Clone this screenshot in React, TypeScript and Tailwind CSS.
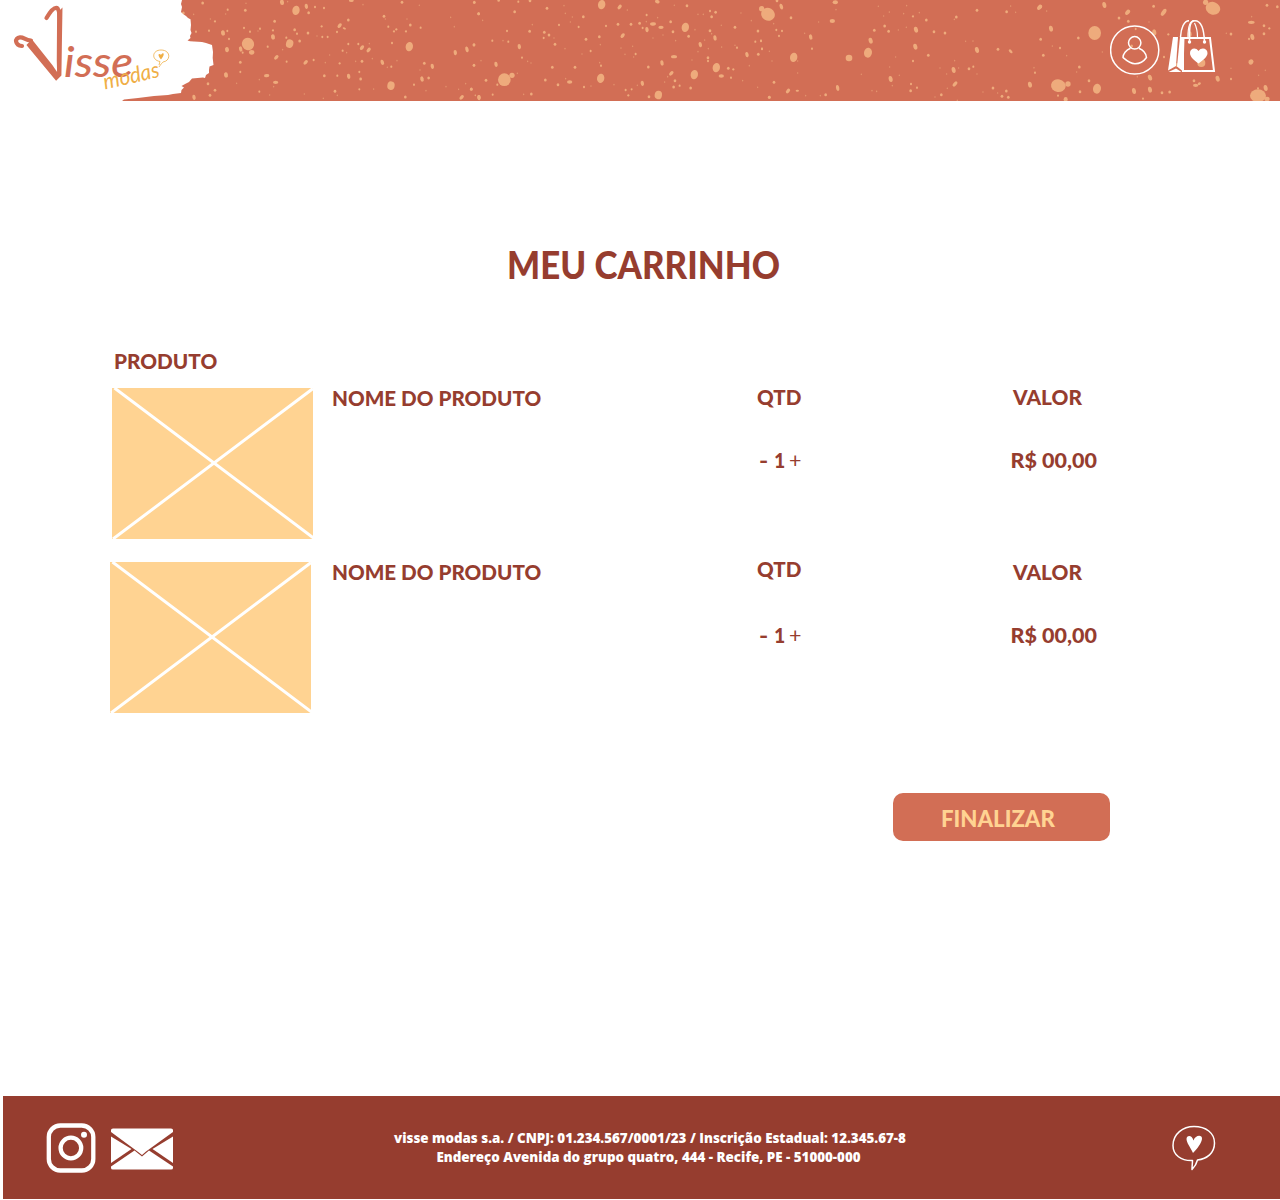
import React from "react";

type Dot = [number, number, number, number?, number?];
type Patch = { x: number; dots: Dot[] };

// Paint splatter, grouped in patches drawn on a grid three times finer than the page.
// Each dot: centre x, centre y, x radius, y radius, rotation.
const patches: Patch[] = [
  {
    x: 180,
    dots: [
      [204, 132, 18, 19, -30], [215, 157, 8, 7], [182, 147, 5, 8, -15], [188, 158, 3], [329, 131, 11, 13, 15], [348, 31, 11, 14, 10],
      [379, 19, 5, 8, -10], [306, 7, 6, 8, -10], [386, 38, 4], [129, 99, 6, 8, -10], [141, 149, 6, 8, -10], [138, 225, 6, 8, -10],
      [279, 111, 6, 8, -10], [289, 172, 8, 5, -45], [377, 187, 8, 5, -45], [260, 227, 8, 5, -5], [287, 247, 8, 5, 0],
      [479, 77, 8, 5, -50], [493, 85, 5, 3, 20], [471, 96, 3], [546, 143, 8, 5, -50], [566, 150, 8, 5, -50], [607, 187, 5, 8, -20],
      [506, 229, 5, 8, -10], [633, 257, 11, 13, 10], [688, 140, 11, 14, 10], [757, 199, 5, 8, -10], [726, 237, 5, 8, -15],
      [746, 234, 4], [826, 158, 5, 8, -10], [861, 148, 5, 9, -15], [845, 292, 8, 5, -45], [897, 292, 5, 7], [514, 2, 7, 4],
      [42, 292, 5, 8, -10], [10, 39, 4], [68, 9, 4], [41, 43, 2], [91, 57, 2], [105, 64, 3], [87, 92, 3], [48, 95, 3], [143, 29, 3],
      [137, 42, 2], [196, 31, 4], [198, 10, 2], [142, 93, 3], [147, 117, 3], [192, 84, 3], [210, 95, 3], [240, 86, 3], [234, 93, 2],
      [284, 64, 4], [279, 91, 3], [263, 140, 3], [323, 5, 2], [344, 89, 4], [351, 101, 3], [384, 99, 4], [319, 113, 3], [359, 123, 4],
      [405, 21, 3], [432, 24, 3], [425, 79, 3], [411, 108, 2], [427, 111, 3], [443, 111, 3], [505, 60, 4], [549, 14, 2],
      [505, 132, 3], [535, 132, 3], [568, 131, 2], [488, 152, 3], [500, 158, 2], [449, 165, 2], [308, 149, 2], [181, 187, 4],
      [181, 216, 3], [320, 185, 3], [401, 180, 3], [436, 188, 2], [479, 190, 3], [527, 184, 2], [546, 184, 4], [577, 176, 2],
      [622, 202, 2], [634, 200, 3], [651, 182, 2], [636, 129, 3], [612, 49, 4], [616, 57, 2], [625, 80, 3], [642, 94, 3], [649, 88, 3],
      [678, 94, 3], [691, 75, 4], [681, 57, 2], [722, 83, 3], [666, 7, 4], [718, 16, 2], [812, 52, 2], [823, 80, 2], [883, 8, 3],
      [896, 41, 4], [882, 135, 4], [882, 196, 3], [733, 190, 4], [720, 210, 2], [702, 254, 3], [738, 272, 2], [676, 291, 4],
      [798, 260, 2], [836, 268, 2], [857, 251, 2], [874, 268, 4], [886, 286, 2], [433, 227, 4], [472, 227, 3], [538, 216, 3],
      [542, 237, 4], [538, 268, 3], [581, 267, 2], [465, 274, 4], [472, 286, 2], [430, 295, 2], [373, 282, 2], [269, 285, 2],
      [238, 275, 3], [238, 239, 2], [281, 260, 2], [170, 250, 2], [105, 271, 4], [90, 286, 4], [84, 251, 4],
    ],
  },
  {
    x: 470,
    dots: [
      [103, 239, 19, 19], [126, 226, 8, 8], [82, 254, 3], [395, 14, 11, 14, 10], [449, 21, 8, 5, -50], [562, 5, 7, 5, 20],
      [392, 235, 11, 14, 10], [565, 285, 11, 13, 10], [646, 82, 11, 14, 10], [673, 224, 11, 14, 10], [739, 203, 11, 14, 10],
      [549, 72, 9, 5, -5], [573, 82, 8, 5, 0], [531, 89, 5, 8, -10], [458, 107, 8, 5, -50], [612, 170, 9, 5, 0], [576, 189, 5, 8, -10],
      [604, 220, 8, 5, -45], [754, 228, 8, 5], [735, 114, 5, 8, -10], [691, 134, 5, 8, -15], [831, 164, 5, 8, -15],
      [148, 140, 5, 8, -10], [78, 193, 5, 8, -10], [299, 246, 8, 5], [517, 250, 5, 8, -10], [27, 293, 5, 8, -10], [86, 1, 4],
      [145, 5, 3], [180, 2, 4], [13, 7, 4], [26, 41, 4], [38, 61, 2], [134, 35, 4], [231, 25, 4], [282, 17, 2], [286, 40, 2],
      [187, 74, 2], [179, 94, 4], [111, 93, 3], [67, 122, 3], [99, 122, 2], [115, 125, 3], [12, 134, 4], [33, 182, 2], [12, 196, 4],
      [4, 267, 4], [48, 241, 4], [142, 220, 2], [156, 173, 3], [173, 184, 2], [183, 189, 2], [247, 202, 4], [315, 202, 4],
      [226, 240, 4], [264, 254, 4], [287, 236, 2], [342, 261, 3], [363, 258, 2], [432, 254, 2], [184, 282, 4], [161, 283, 2],
      [68, 284, 3], [16, 286, 2], [267, 75, 3], [301, 66, 2], [307, 51, 2], [340, 50, 4], [326, 81, 3], [223, 97, 4], [237, 105, 4],
      [221, 114, 3], [252, 114, 2], [255, 133, 4], [285, 146, 2], [348, 118, 4], [388, 110, 4], [391, 134, 2], [362, 153, 3],
      [336, 162, 2], [408, 78, 3], [444, 73, 4], [483, 73, 4], [472, 30, 2], [530, 45, 3], [529, 65, 2], [509, 70, 4], [518, 84, 3],
      [563, 53, 2], [602, 65, 4], [613, 16, 2], [651, 17, 4], [609, 95, 4], [579, 105, 2], [549, 114, 2], [617, 122, 2], [656, 109, 4],
      [675, 89, 2], [684, 43, 2], [700, 43, 2], [720, 33, 3], [737, 37, 4], [725, 50, 4], [754, 76, 2], [795, 82, 4], [813, 39, 2],
      [844, 62, 2], [864, 93, 4], [856, 125, 3], [873, 122, 3], [720, 92, 4], [725, 101, 2], [704, 120, 2], [715, 146, 2],
      [755, 141, 2], [795, 136, 2], [801, 143, 3], [684, 155, 2], [714, 173, 4], [714, 183, 3], [666, 180, 2], [775, 205, 4],
      [790, 208, 3], [783, 233, 3], [838, 197, 2], [818, 242, 2], [863, 262, 2], [865, 163, 4], [876, 146, 3], [453, 144, 2],
      [488, 139, 2], [465, 163, 2], [497, 162, 3], [491, 171, 2], [389, 188, 2], [393, 197, 3], [535, 201, 4], [593, 230, 2],
      [584, 246, 2], [615, 242, 4], [611, 261, 4], [629, 257, 3], [662, 264, 4], [467, 270, 3], [485, 268, 3], [502, 256, 2],
      [475, 286, 3], [537, 290, 4], [898, 292, 4],
    ],
  },
  {
    x: 760,
    dots: [
      [24, 43, 21, 19, 30], [5, 26, 8, 8], [64, 20, 5, 9, -20], [51, 2, 4], [93, 53, 4], [101, 172, 11, 14, 10], [267, 174, 10, 10],
      [324, 158, 12, 15, 10], [332, 122, 6, 9, -15], [217, 63, 8, 6], [226, 7, 8, 6], [228, 29, 2], [152, 111, 5, 8, -15],
      [84, 273, 8, 5, -50], [112, 272, 5, 3], [233, 264, 5, 9, -10], [392, 237, 6, 9, -10], [468, 89, 6, 9, -15], [466, 140, 6, 9, -15],
      [581, 210, 6, 9, -10], [585, 252, 9, 5, -50], [651, 150, 6, 9, -15], [752, 154, 7, 4, 45], [839, 22, 9, 6, -50],
      [41, 71, 2], [49, 90, 3], [66, 93, 3], [57, 108, 3], [3, 123, 3], [6, 147, 3],
      [28, 154, 2], [36, 183, 2], [113, 183, 2], [113, 219, 2], [42, 247, 4], [28, 292, 4], [137, 287, 2], [181, 287, 2],
      [197, 284, 4], [134, 100, 2], [156, 146, 3], [176, 66, 2], [355, 19, 2], [371, 48, 2], [388, 36, 2], [431, 41, 2],
      [440, 17, 2], [459, 49, 3], [478, 38, 2], [499, 60, 4], [374, 78, 4], [343, 91, 4], [386, 94, 4], [415, 90, 2], [439, 82, 2],
      [522, 95, 4], [555, 99, 4], [589, 51, 4], [583, 58, 2], [651, 31, 4], [740, 35, 4], [752, 18, 2], [767, 37, 2],
      [714, 148, 4], [617, 124, 2], [639, 123, 2], [505, 166, 4],
      [407, 171, 2], [459, 183, 3], [389, 201, 2], [418, 226, 2], [397, 257, 2], [304, 223, 2], [336, 272, 2], [350, 274, 2],
      [453, 252, 3], [471, 263, 3], [452, 272, 4], [540, 204, 2], [584, 182, 2], [596, 204, 2], [560, 222, 2], [627, 206, 4],
      [640, 200, 3], [651, 222, 2], [562, 265, 2], [544, 284, 4], [525, 291, 2], [592, 301, 2], [669, 276, 2], [699, 264, 4],
      [713, 279, 2], [739, 273, 4], [726, 289, 4], [745, 292, 4], [822, 203, 2], [825, 218, 3], [810, 254, 6, 9, -10],
    ],
  },
  {
    x: 1040,
    dots: [
      [55, 257, 22, 19, 10], [84, 252, 8, 8], [54, 287, 3], [77, 298, 6, 7], [171, 266, 12, 15, 10], [164, 99, 19, 21], [519, 25, 22, 19, 20],
      [497, 7, 8, 8], [193, 15, 6, 9, -10], [263, 37, 9, 6, -50], [237, 54, 4], [265, 64, 4], [371, 37, 12, 6, -55], [33, 86, 6, 9, -10],
      [343, 97, 6, 9, -10], [449, 103, 6, 9], [484, 189, 12, 12], [330, 233, 6, 9, -20], [330, 269, 6, 9, -10], [282, 273, 6, 9, -10],
      [309, 296, 3], [366, 278, 4], [389, 276, 4], [467, 256, 8, 5, 0], [478, 251, 5, 4, -30], [462, 242, 4], [533, 236, 6, 9, -15],
      [573, 237, 3], [573, 205, 2], [633, 186, 8, 7, -45], [634, 67, 10, 5], [637, 111, 6, 9, -10], [672, 77, 4], [688, 85, 3],
      [672, 101, 4], [681, 16, 4], [712, 20, 4], [635, 50, 2], [573, 102, 4], [559, 100, 2], [385, 103, 3], [372, 171, 3],
      [341, 19, 4], [2, 20, 4], [20, 33, 2], [2, 118, 4], [37, 138, 2], [60, 144, 3], [10, 166, 4], [80, 167, 2], [115, 114, 4],
      [118, 201, 4], [110, 216, 2], [147, 242, 4], [120, 275, 4], [187, 156, 2], [327, 66, 2], [292, 230, 2], [287, 87, 3],
      [275, 138, 4], [654, 287, 24, 19], [677, 264, 6, 9, -10], [681, 297, 8, 7], [654, 265, 3], [656, 226, 2], [676, 211, 2],
      [627, 117, 3], [412, 195, 6, 6],
    ],
  },
];

function Splatter() {
  return (
    <svg className="absolute inset-0 h-full w-full" viewBox="0 0 1280 101" aria-hidden="true">
      {patches.map((p) => (
        <g key={p.x} transform={`translate(${p.x} 0) scale(0.3333)`} fill="#eeab7c">
          {p.dots.map(([cx, cy, rx, ry, rot], i) => (
            <ellipse key={i} cx={cx} cy={cy} rx={rx} ry={ry ?? rx + 0.5} transform={`rotate(${rot ?? 0} ${cx} ${cy})`} opacity={rx < 3 ? 0.65 : 1} />
          ))}
        </g>
      ))}
      <path
        fill="#fff"
        d="M0 0H182L181 4L182 7L181 12L183 14L186 16L188 18L190.500 19.300L191 25L190.500 30L191.500 33L190 36L190.500 38L187.500 40.500L190 41.300L202 42L206 43L212 45L213 52L212.700 58L213.500 65L209.500 66.500L209 70L209 73L206 75L205 78L203 77.500L192 78.500L189 82L186 83.500L181.500 86L184 87.500L181.500 90L181 93L173 94L168 95L154 96L138 98L124 99.500L122 101H0Z"
      />
    </svg>
  );
}

function Logo() {
  return (
    <svg className="relative h-[101px] w-[184px] overflow-visible" viewBox="0 0 184 101" role="img" aria-label="Visse modas">
      <g fill="none" stroke="#d26e55" strokeWidth="4.200" strokeLinecap="round" strokeLinejoin="round">
        <path d="M22 46C15 45 14 38 20 37.300C24 37 25 40 31 40.500" />
        <path d="M46.500 18C50 12 54 7 57 8C59 9 59.500 14 60 19" />
      </g>
      <text transform="matrix(0.547 -0.566 0.208 0.754 40.500 97)" fontSize="100" fontFamily="Liberation Sans, sans-serif" fill="#d26e55">V</text>
      <text x="64" y="76.500" fontSize="42" fontStyle="italic" fontWeight="500" fontFamily="Lato, sans-serif" fill="#d26e55" textLength="69" lengthAdjust="spacingAndGlyphs">isse</text>
      <text transform="translate(105 89.500) rotate(-13)" fontSize="22" fontStyle="italic" fontFamily="Lato, sans-serif" fill="#efae45" textLength="57" lengthAdjust="spacingAndGlyphs">modas</text>
      <path d="M159 65L160 61.500C151 60 152 50 161 50C171 50 171 61 163 62C162 63 161 64 159 67" fill="none" stroke="#efae45" strokeWidth="0.8" />
      <path d="M161 59.500C157 55 158.500 52.500 161 54.800C163 51.500 166 53.500 161 59.500Z" fill="#efae45" />
    </svg>
  );
}

function UserIcon() {
  return (
    <svg className="h-[50px] w-[50px]" viewBox="0 0 50 50" fill="none" stroke="#fff" strokeWidth="1.500">
      <circle cx="24.700" cy="25" r="24.100" />
      <circle cx="24.700" cy="17.800" r="6.200" />
      <path d="M20.500 23.300C16 25 13 29 13 32.500C17 36 20 38.800 25 38.800C30 38.800 34 36 36.500 32.500C36 28 33 25 28.900 23.300" strokeLinejoin="round" />
    </svg>
  );
}

function BagIcon() {
  return (
    <svg className="h-[54px] w-[48px]" viewBox="0 0 48 54" fill="none" stroke="#fff">
      <path d="M5 18H10L8 47L0 51.500Z" fill="#fff" stroke="none" />
      <path d="M12 18H16.500L15.500 52H14.500L9 47.500Z" fill="#fff" stroke="none" />
      <path d="M0.500 53L8 49.500L13.500 53Z" fill="#fff" stroke="none" />
      <path d="M15 19H42L46 52H15Z" strokeWidth="2" />
      <path d="M12.500 18C13 9 16 1.700 21 1.700" strokeWidth="1.500" />
      <path d="M21.500 23V18C21.500 9 21.500 1.700 27 1.700C33 1.700 36 10 36.500 23" strokeWidth="1.500" />
      <path d="M20 18C20 9 21.500 2 26 1.700M26.500 4C28.500 8 29.500 12 29.500 18" strokeWidth="1.200" />
      <circle cx="21.500" cy="23" r="1.700" fill="#fff" stroke="none" />
      <circle cx="36.500" cy="23" r="1.700" fill="#fff" stroke="none" />
      <path d="M30.500 44.500C26 41 22 38 22 34C22 29 28 28 30.500 32C33 28 39.500 29 39.500 34C39.500 38 35 41 30.500 44.500Z" fill="#fff" stroke="none" />
    </svg>
  );
}

function Placeholder() {
  return (
    <svg className="block h-[151px] w-[201px] bg-[#ffd392]" viewBox="0 0 201 151" stroke="#fff" strokeWidth="3">
      <path d="M2.500 0L201.500 150M1 151L201 0.500" />
    </svg>
  );
}

function Label({ children, className = "" }: { children: React.ReactNode; className?: string }) {
  return <span className={`block w-fit origin-left text-[21.500px] leading-6 font-black whitespace-pre ${className}`}>{children}</span>;
}

type RowProps = { image: string; name: string; qty: string; count: string; value: string };

function CartRow({ image, name, qty, count, value }: RowProps) {
  return (
    <div className="grid grid-cols-[220px_425px_255px_auto]">
      <div className={image}><Placeholder /></div>
      <Label className={`scale-x-[0.96] ${name}`}>NOME DO PRODUTO</Label>
      <div className={qty}>
        <Label className="scale-x-[0.96]">QTD</Label>
        <div className={`flex text-[21.500px] leading-6 font-black ${count}`}>
          <span className="ml-0.5 w-[15px] origin-left scale-x-[1.15]">-</span>
          <span className="w-[15px] origin-left scale-x-90">1</span>
          <span className="font-normal">+</span>
        </div>
      </div>
      <div className={value}>
        <Label className="ml-px scale-x-[0.97]">VALOR</Label>
        <Label className="mt-[39px] -ml-[1.500px]">R$ 00,00</Label>
      </div>
    </div>
  );
}

function InstagramIcon() {
  return (
    <svg className="h-[50px] w-[50px]" viewBox="0 0 50 50" fill="none" stroke="#fff">
      <rect x="2.800" y="2.500" width="44.500" height="45" rx="11.500" strokeWidth="4.300" />
      <circle cx="24.900" cy="25" r="10.300" strokeWidth="4.300" />
      <circle cx="38" cy="11.700" r="3" fill="#fff" stroke="none" />
    </svg>
  );
}

function MailIcon() {
  return (
    <svg className="h-[42px] w-[62px]" viewBox="0 0 62 42" fill="#fff">
      <path d="M0 4V2Q0 0.500 2 0.500H60Q62 0.500 62 2V4L35 23.500L31 27L26.500 23.500Z" />
      <path d="M0 8.500L20.500 21L0 35Z" />
      <path d="M62 8.500V35L41.500 21Z" />
      <path d="M0 38.500L23.500 22.500L31 28.500L38 22.500L62 38.500V40Q62 41.500 60 41.500H2Q0 41.500 0 40Z" />
    </svg>
  );
}

function HeartBubble() {
  return (
    <svg className="h-[46px] w-[44px]" viewBox="0 0 44 46" fill="none" stroke="#fff">
      <path d="M20.500 35.500C9 36 1 30 1 20.500C1 9 11 1.500 22 1.500C34 1.500 42.500 8 42.500 18C42.500 28 35 34 25.500 35C24.500 39 22.500 42 20 44.500C20 41 20.500 38 20.500 35.500Z" strokeWidth="1.500" strokeLinejoin="round" />
      <path d="M21 28C18 22 14.500 17.500 14.500 14C14.500 10 20 9.500 21.500 15.500C23.500 9.500 30.500 9.500 30 14C29.500 18 25.500 23.500 21 28Z" fill="#fff" stroke="none" />
    </svg>
  );
}

export default function App() {
  return (
    <div className="flex h-[1200px] flex-col bg-white font-['Lato',sans-serif] text-[#963d2f]">
      <header className="relative flex h-[101px] shrink-0 justify-between bg-[#d26e55]">
        <Splatter />
        <Logo />
        <div className="relative mr-16 flex">
          <div className="mt-[25px] mr-2"><UserIcon /></div>
          <div className="mt-[19px]"><BagIcon /></div>
        </div>
      </header>

      <main className="flex grow flex-col pl-28">
        <h1 className="mt-36 ml-[395px] w-fit origin-left scale-x-[0.93] text-[37.500px] leading-10 font-black">MEU CARRINHO</h1>
        <Label className="mt-16 ml-0.5 scale-x-[0.965]">PRODUTO</Label>
        <div className="mt-3 flex flex-col gap-[18px]">
          <CartRow image="mt-[3px]" name="mt-px" qty="" count="mt-[39px]" value="" />
          <CartRow image="mt-[5px] -ml-0.5" name="mt-[3px]" qty="" count="mt-[42px]" value="mt-[3px]" />
        </div>
        <button className="mt-20 ml-[781px] flex h-12 w-[217px] items-center rounded-[10px] bg-[#d26e55] pt-px pl-12 text-[23.500px] leading-6 font-black text-[#ffd392]">
          <span className="block origin-left scale-x-[0.945]">FINALIZAR</span>
        </button>
      </main>

      <footer className="mb-px ml-[3px] flex h-[103px] shrink-0 items-center bg-[#963d2f] text-white">
        <div className="ml-[43px] flex items-center gap-[15px] pt-px">
          <InstagramIcon />
          <div className="pt-0.5"><MailIcon /></div>
        </div>
        <p className="ml-[220px] w-[514px] text-center font-['Open_Sans',sans-serif] text-[13.360px] leading-[19px] font-extrabold">
          <span className="block">visse modas s.a. / CNPJ: 01.234.567/0001/23 / Inscrição Estadual: 12.345.67-8</span>
          <span className="block pr-[3px]">Endereço Avenida do grupo quatro, 444 - Recife, PE - 51000-000</span>
        </p>
        <div className="mr-16 ml-auto pt-px"><HeartBubble /></div>
      </footer>
    </div>
  );
}
